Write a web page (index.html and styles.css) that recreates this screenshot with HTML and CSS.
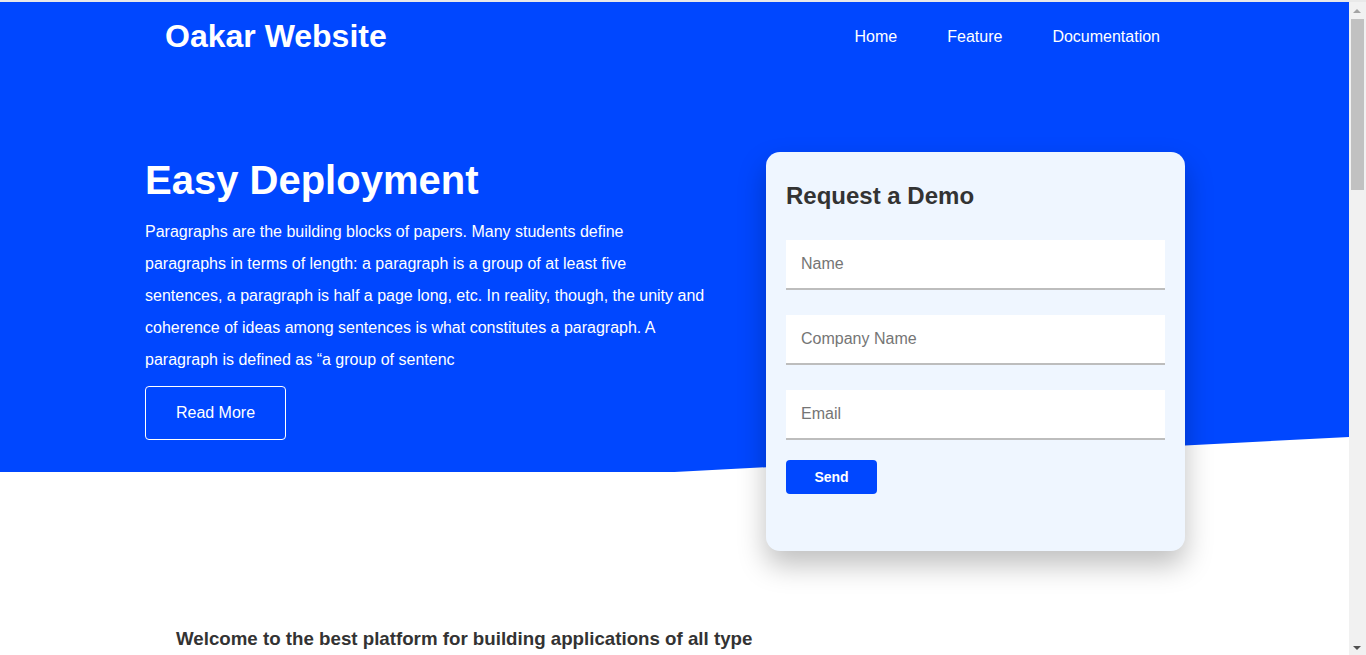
FILE: index.html
```html
<!DOCTYPE html>
<html lang="en">
<head>
<meta charset="utf-8">
<title>Oakar Website</title>
<link rel="stylesheet" href="styles.css">
</head>
<body>
<div class="page">
  <section class="hero">
    <header class="nav">
      <div class="logo">Oakar Website</div>
      <nav class="links">
        <a href="#">Home</a>
        <a href="#">Feature</a>
        <a href="#">Documentation</a>
      </nav>
    </header>
    <div class="hero-body">
      <div class="intro">
        <h1>Easy Deployment</h1>
        <p>Paragraphs are the building blocks of papers. Many students define paragraphs in terms of length: a paragraph is a group of at least five sentences, a paragraph is half a page long, etc. In reality, though, the unity and coherence of ideas among sentences is what constitutes a paragraph. A paragraph is defined as “a group of sentenc</p>
        <a class="read-more" href="#">Read More</a>
      </div>
      <form class="card">
        <h2>Request a Demo</h2>
        <input type="text" placeholder="Name">
        <input type="text" placeholder="Company Name">
        <input type="email" placeholder="Email">
        <button type="button" class="send">Send</button>
      </form>
    </div>
  </section>
  <section class="welcome">
    <h3>Welcome to the best platform for building applications of all type</h3>
  </section>
</div>
<div class="scrollbar" aria-hidden="true">
  <span class="arrow up"></span>
  <span class="thumb"></span>
  <span class="arrow down"></span>
</div>
</body>
</html>
```

FILE: styles.css
```css
html, body {
  margin: 0;
  padding: 0;
}
body {
  border-top: 2px solid #e9e9e9;
  font-family: "Liberation Sans", Arial, sans-serif;
  background: #fff;
  color: #333;
}
.page {
  width: calc(100% - 17px);
}
.hero {
  position: relative;
  height: 470px;
}
.hero::before {
  content: "";
  position: absolute;
  inset: 0;
  background: #0047ff;
  clip-path: polygon(0 0, 100% 0, 100% calc(100% - 35px), 50% 100%, 0 100%);
  z-index: 0;
}
.nav, .hero-body {
  position: relative;
  z-index: 1;
}
.nav {
  display: flex;
  justify-content: space-between;
  align-items: center;
  height: 68px;
  padding: 1px 189px 0 165px;
  box-sizing: border-box;
}
.logo {
  color: #fff;
  font-weight: bold;
  font-size: 32px;
  margin-top: -1px;
}
.links {
  display: flex;
  gap: 50px;
}
.links a {
  color: #fff;
  text-decoration: none;
  font-size: 16px;
}
.hero-body {
  display: flex;
  align-items: flex-start;
  gap: 61px;
  padding: 82px 0 0 145px;
}
.intro {
  width: 560px;
  margin-top: 5px;
  color: #fff;
}
.intro h1 {
  margin: 0;
  font-size: 40px;
  line-height: 46px;
  font-weight: bold;
}
.intro p {
  margin: 13px 0 0;
  font-size: 16px;
  line-height: 32px;
}
.read-more {
  display: inline-flex;
  align-items: center;
  justify-content: center;
  margin-top: 10px;
  width: 141px;
  height: 54px;
  box-sizing: border-box;
  border: 1px solid #fff;
  border-radius: 4px;
  color: #fff;
  text-decoration: none;
  font-size: 16px;
}
.card {
  width: 419px;
  height: 399px;
  box-sizing: border-box;
  padding: 30px 20px 0;
  background: #eff6ff;
  border-radius: 14px;
  box-shadow: 0 14px 28px rgba(0, 0, 0, 0.25);
  display: flex;
  flex-direction: column;
  align-items: flex-start;
}
.card h2 {
  margin: 0 0 30px;
  font-size: 24px;
  line-height: 28px;
  color: #333;
}
.card input {
  width: 100%;
  height: 50px;
  box-sizing: border-box;
  border: none;
  border-bottom: 2px solid #bdbdbd;
  background: #fff;
  padding: 0 15px;
  margin: 0 0 25px;
  font-family: "Liberation Sans", Arial, sans-serif;
  font-size: 16px;
  color: #333;
  outline: none;
}
.card input::placeholder {
  color: #757575;
}
.card input:last-of-type {
  margin-bottom: 20px;
}
.send {
  width: 91px;
  height: 34px;
  border: none;
  border-radius: 4px;
  background: #0047ff;
  color: #fff;
  font-family: "Liberation Sans", Arial, sans-serif;
  font-size: 14px;
  font-weight: bold;
}
.welcome {
  padding: 156px 0 0 176px;
  min-height: 1760px;
}
.welcome h3 {
  margin: 0;
  font-size: 18.72px;
  line-height: 22px;
  color: #333;
}
.scrollbar {
  position: fixed;
  top: 2px;
  right: 0;
  bottom: 0;
  width: 17px;
  background: #f1f1f1;
}
.thumb {
  position: absolute;
  left: 2px;
  right: 2px;
  top: 17px;
  height: 171px;
  background: #c1c1c1;
}
.arrow {
  position: absolute;
  left: 4px;
  width: 0;
  height: 0;
  border-left: 4.5px solid transparent;
  border-right: 4.5px solid transparent;
}
.arrow.up {
  top: 7px;
  border-bottom: 4px solid #a3a3a3;
}
.arrow.down {
  bottom: 5px;
  border-top: 4px solid #505050;
}
```
